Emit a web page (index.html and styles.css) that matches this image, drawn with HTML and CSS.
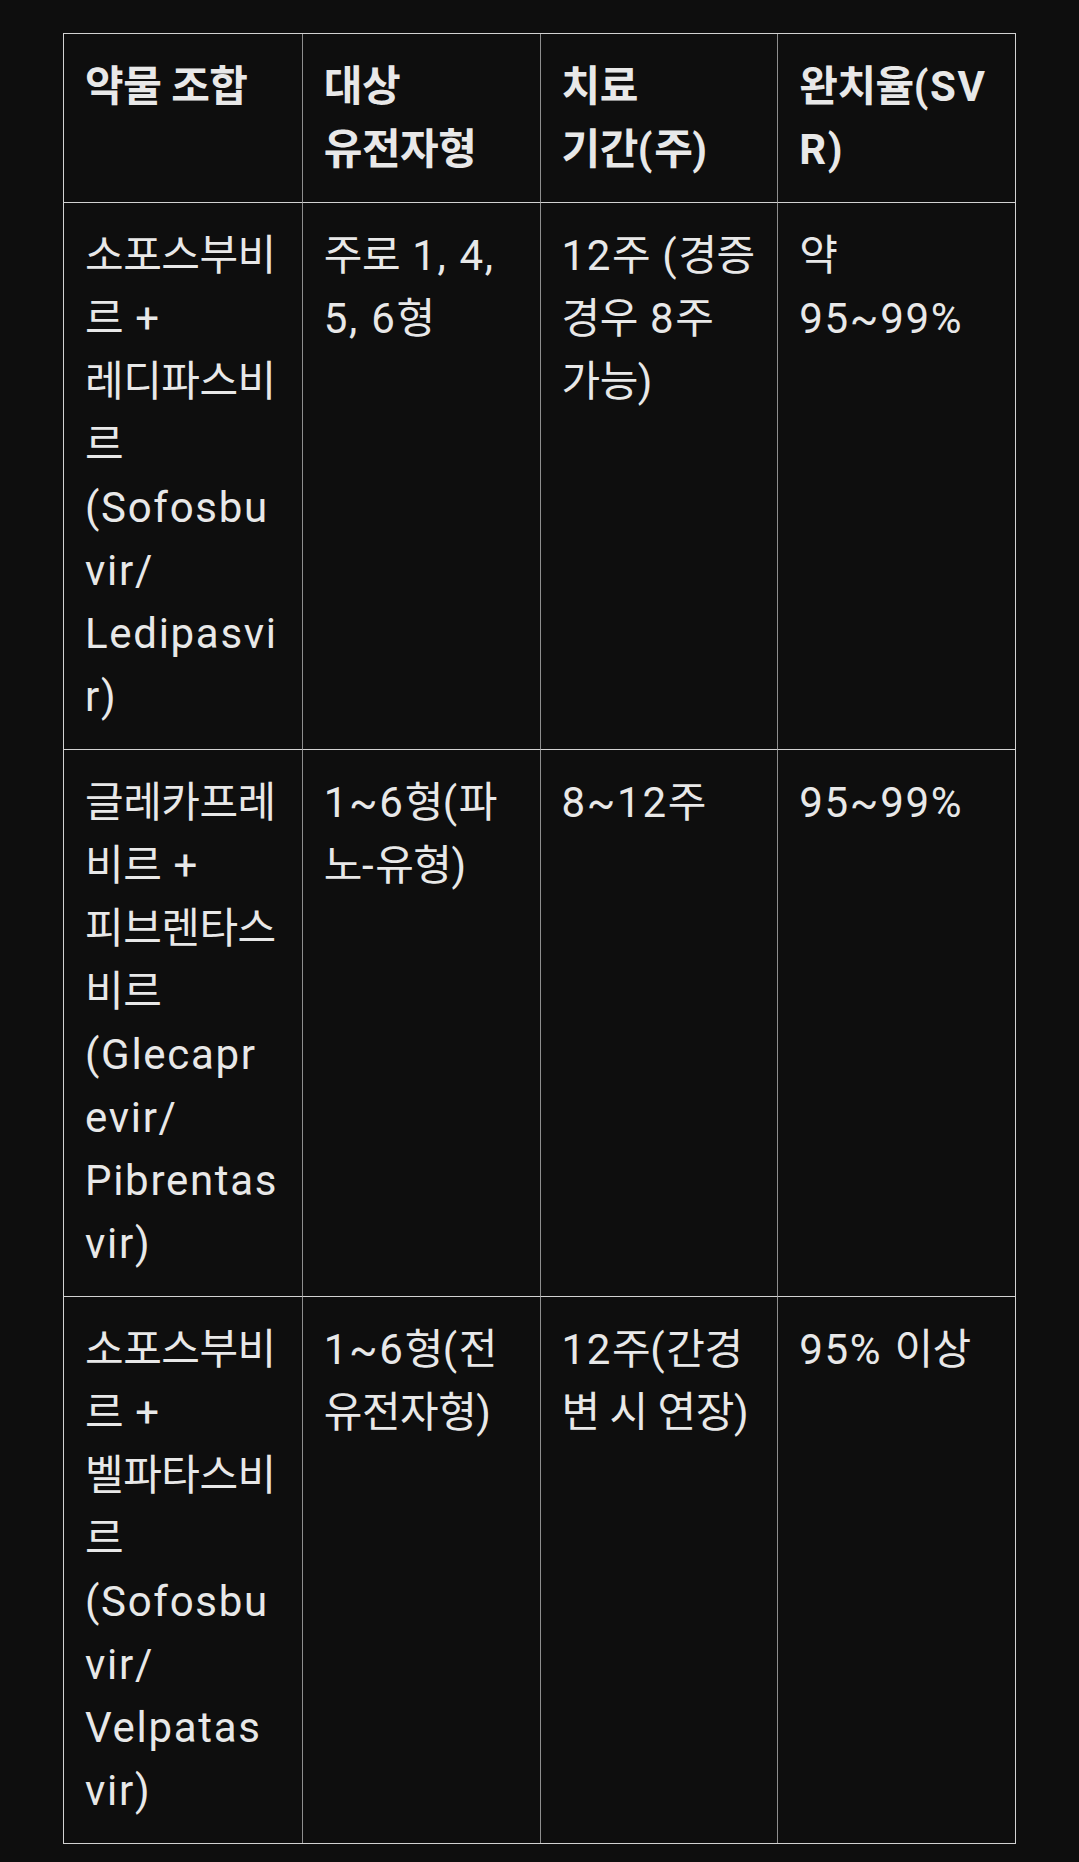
FILE: index.html
```html
<!DOCTYPE html>
<html lang="ko">
<head>
<meta charset="utf-8">
<title>C형 간염 치료 약물 조합</title>
<link rel="stylesheet" href="styles.css">
</head>
<body>
<div class="page">
  <table class="regimen">
    <thead>
      <tr>
        <th><span class="ko">약물 조합</span></th>
        <th><span class="ko">대상 유전자형</span></th>
        <th><span class="ko">치료 기간</span>&#8288;(<span class="ko">주</span>)</th>
        <th><span class="ko">완치율</span>&#8288;(SVR)</th>
      </tr>
    </thead>
    <tbody>
      <tr>
        <td><span class="ko">소포스부비르</span> + <span class="ko">레디파스비르</span> (Sofosbuvir/<wbr>Ledipasvir)</td>
        <td><span class="ko">주로</span> 1, 4, 5, 6<span class="ko">형</span></td>
        <td>12<span class="ko">주</span> (<span class="ko">경증 경우</span> 8<span class="ko">주 가능</span>)</td>
        <td><span class="ko">약</span> 95~99%</td>
      </tr>
      <tr>
        <td><span class="ko">글레카프레비르</span> + <span class="ko">피브렌타스비르</span> (Glecaprevir/<wbr>Pibrentasvir)</td>
        <td>1~6<span class="ko">형</span>&#8288;(<span class="ko">파노</span>-<span class="ko">유형</span>)</td>
        <td>8~12<span class="ko">주</span></td>
        <td>95~99%</td>
      </tr>
      <tr>
        <td><span class="ko">소포스부비르</span> + <span class="ko">벨파타스비르</span> (Sofosbuvir/<wbr>Velpatasvir)</td>
        <td>1~6<span class="ko">형</span>&#8288;(<span class="ko">전유전자형</span>)</td>
        <td>12<span class="ko">주</span>&#8288;(<span class="ko">간경변 시 연장</span>)</td>
        <td>95% <span class="ko">이상</span></td>
      </tr>
    </tbody>
  </table>
</div>
</body>
</html>
```

FILE: styles.css
```css
html, body {
  margin: 0;
  padding: 0;
  background: #0e0e0e;
}

.page {
  padding: 33px 63px 19px;
}

.regimen {
  width: 100%;
  table-layout: fixed;
  border-collapse: separate;
  border-spacing: 0;
  border: 1px solid #d2d2d2;
  font-family: "Roboto", "Noto Sans CJK KR", sans-serif;
  font-size: 42px;
  line-height: 63px;
  letter-spacing: 1.7px;
  color: #e8e8e8;
  word-break: keep-all;
  overflow-wrap: anywhere;
}

.regimen th,
.regimen td {
  padding: 21px;
  vertical-align: top;
  text-align: left;
}

.regimen th {
  font-weight: 700;
}

.regimen td {
  font-weight: 400;
  border-top: 1px solid #d2d2d2;
}

.regimen td:first-child {
  padding-right: 22.25px;
}

.regimen th + th,
.regimen td + td {
  border-left: 1px solid #8e8e8e;
}

.ko {
  line-height: 1;
  letter-spacing: -0.5px;
}
```
